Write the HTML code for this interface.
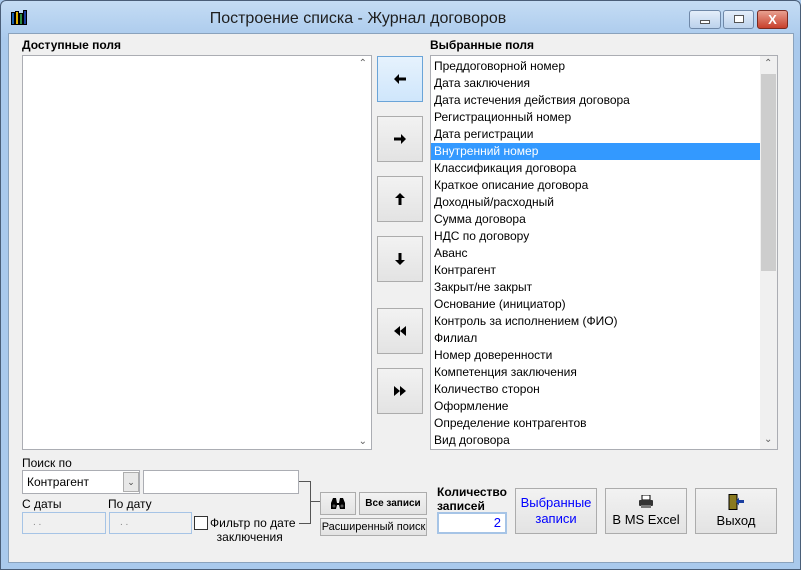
<!DOCTYPE html>
<html><head><meta charset="utf-8"><style>
*{box-sizing:border-box;margin:0;padding:0}
body{width:801px;height:570px;position:relative;overflow:hidden;background:#a9c9ec;font-family:"Liberation Sans","DejaVu Sans",sans-serif;font-size:12px;color:#000}
.a{position:absolute}
#frame{left:0;top:0;width:801px;height:570px;background:linear-gradient(#c4dcf4,#a9c9ec 40px,#a9c9ec);border:1px solid #4a5e78;border-radius:6px 6px 0 0}
#client{left:8px;top:33px;width:786px;height:530px;background:#f0f0f0;border:1px solid #8aa2bc}
.lbl{font-weight:bold;font-size:12px}
.list{background:#fff;border:1px solid #abadb3}
.btn{background:linear-gradient(#f2f2f2,#e3e3e3);border:1px solid #acacac;display:flex;align-items:center;justify-content:center;text-align:center}
.row{position:absolute;left:2px;height:17px;line-height:17px;padding-left:1px;width:327px;white-space:nowrap}
.inp{background:#fff;border:1px solid #abadb3}
.dis{background:#f0f0f0;border:1px solid #a6c4e6;color:#888;font-size:10px;padding-left:10px;line-height:20px}
.wb{top:10px;height:19px;border:1px solid #6f88a8;border-radius:3px;background:linear-gradient(#e4eefa,#bcd2ec)}
</style></head><body>
<div id="frame" class="a"></div>
<div class="a" style="left:11px;top:10px;width:16px;height:16px">
<div class="a" style="left:0;top:2px;width:4px;height:13px;background:#1a5fb0;border:1px solid #000"></div>
<div class="a" style="left:4px;top:1px;width:4px;height:14px;background:#e0b000;border:1px solid #000"></div>
<div class="a" style="left:8px;top:3px;width:4px;height:12px;background:#2a8a40;border:1px solid #000"></div>
<div class="a" style="left:12px;top:0;width:4px;height:15px;background:#1a3fa0;border:1px solid #000"></div>
</div>
<div class="a" style="left:0;top:10px;width:716px;text-align:center;font-size:16px;color:#1e1e1e">Построение списка - Журнал договоров</div>
<div class="a wb" style="left:689px;width:32px"><div class="a" style="left:10px;top:9px;width:10px;height:4px;background:#fff;border:1px solid #555"></div></div>
<div class="a wb" style="left:723px;width:31px"><div class="a" style="left:10px;top:4px;width:10px;height:8px;border:1px solid #555;background:#fff"></div></div>
<div class="a wb" style="left:757px;width:31px;background:linear-gradient(#e8a090,#c8402c);border-color:#7a2a20;color:#fff;font-weight:bold;text-align:center;font-size:13px;line-height:17px">X</div>
<div id="client" class="a"></div>

<div class="a lbl" style="left:22px;top:38px">Доступные поля</div>
<div class="a lbl" style="left:430px;top:38px">Выбранные поля</div>

<div class="a list" style="left:22px;top:55px;width:350px;height:395px">
<div class="a" style="right:4px;top:2px;color:#606060;font-size:10px">&#8963;</div>
<div class="a" style="right:4px;bottom:2px;color:#606060;font-size:10px">&#8964;</div>
</div>

<div class="a btn" style="left:377px;top:56px;width:46px;height:46px;background:linear-gradient(#e6f2fd,#cfe6fb);border-color:#6aa4d8"><svg width="12" height="10" viewBox="0 0 12 10"><path d="M0 5 L5 0 L5 3.5 L12 3.5 L12 6.5 L5 6.5 L5 10 Z" fill="#000"/></svg></div>
<div class="a btn" style="left:377px;top:116px;width:46px;height:46px"><svg width="12" height="10" viewBox="0 0 12 10"><path d="M12 5 L7 0 L7 3.5 L0 3.5 L0 6.5 L7 6.5 L7 10 Z" fill="#000"/></svg></div>
<div class="a btn" style="left:377px;top:176px;width:46px;height:46px"><svg width="10" height="12" viewBox="0 0 10 12"><path d="M5 0 L0 5 L3.5 5 L3.5 12 L6.5 12 L6.5 5 L10 5 Z" fill="#000"/></svg></div>
<div class="a btn" style="left:377px;top:236px;width:46px;height:46px"><svg width="10" height="12" viewBox="0 0 10 12"><path d="M5 12 L0 7 L3.5 7 L3.5 0 L6.5 0 L6.5 7 L10 7 Z" fill="#000"/></svg></div>
<div class="a btn" style="left:377px;top:308px;width:46px;height:46px"><svg width="12" height="10" viewBox="0 0 12 10"><path d="M0 5 L6 0 L6 10 Z M6 5 L12 0 L12 10 Z" fill="#000"/></svg></div>
<div class="a btn" style="left:377px;top:368px;width:46px;height:46px"><svg width="12" height="10" viewBox="0 0 12 10"><path d="M0 0 L6 5 L0 10 Z M6 0 L12 5 L6 10 Z" fill="#000"/></svg></div>

<div class="a list" style="left:430px;top:55px;width:348px;height:395px;overflow:hidden">
<div class="a" style="left:0;top:87px;width:329px;height:17px;background:#3399ff"></div>
<div class="row" style="top:2px">Преддоговорной номер</div>
<div class="row" style="top:19px">Дата заключения</div>
<div class="row" style="top:36px">Дата истечения действия договора</div>
<div class="row" style="top:53px">Регистрационный номер</div>
<div class="row" style="top:70px">Дата регистрации</div>
<div class="row" style="top:87px;color:#fff">Внутренний номер</div>
<div class="row" style="top:104px">Классификация договора</div>
<div class="row" style="top:121px">Краткое описание договора</div>
<div class="row" style="top:138px">Доходный/расходный</div>
<div class="row" style="top:155px">Сумма договора</div>
<div class="row" style="top:172px">НДС по договору</div>
<div class="row" style="top:189px">Аванс</div>
<div class="row" style="top:206px">Контрагент</div>
<div class="row" style="top:223px">Закрыт/не закрыт</div>
<div class="row" style="top:240px">Основание (инициатор)</div>
<div class="row" style="top:257px">Контроль за исполнением (ФИО)</div>
<div class="row" style="top:274px">Филиал</div>
<div class="row" style="top:291px">Номер доверенности</div>
<div class="row" style="top:308px">Компетенция заключения</div>
<div class="row" style="top:325px">Количество сторон</div>
<div class="row" style="top:342px">Оформление</div>
<div class="row" style="top:359px">Определение контрагентов</div>
<div class="row" style="top:376px">Вид договора</div>
<div class="a" style="left:329px;top:0;width:17px;height:393px;background:#f0f0f0"></div>
<div class="a" style="left:330px;top:18px;width:15px;height:197px;background:#cdcdcd"></div>
<div class="a" style="left:333px;top:2px;color:#606060;font-size:10px">&#8963;</div>
<div class="a" style="left:333px;top:378px;color:#606060;font-size:10px">&#8964;</div>
</div>

<div class="a" style="left:22px;top:456px">Поиск по</div>
<div class="a inp" style="left:22px;top:470px;width:118px;height:24px;line-height:22px;padding-left:4px">Контрагент</div>
<div class="a" style="left:123px;top:472px;width:16px;height:20px;background:#e8e8e8;border:1px solid #adadad;text-align:center;font-size:9px;line-height:18px;color:#444">&#8964;</div>
<div class="a inp" style="left:143px;top:470px;width:156px;height:24px"></div>
<div class="a" style="left:22px;top:497px">С даты</div>
<div class="a" style="left:108px;top:497px">По дату</div>
<div class="a dis" style="left:22px;top:512px;width:84px;height:22px">. .</div>
<div class="a dis" style="left:109px;top:512px;width:83px;height:22px">. .</div>
<div class="a" style="left:194px;top:516px;width:14px;height:14px;background:#fff;border:1px solid #333"></div>
<div class="a" style="left:210px;top:516px;line-height:14px">Фильтр по дате<br>&nbsp;&nbsp;заключения</div>
<div class="a" style="left:299px;top:481px;width:12px;height:43px;border:1px solid #555;border-left:none"></div>
<div class="a" style="left:311px;top:501px;width:9px;height:1px;background:#555"></div>
<div class="a btn" style="left:320px;top:492px;width:36px;height:23px"><svg width="16" height="12" viewBox="0 0 16 12"><path d="M1 5 L3 0 L6 0 L7 5 L9 5 L10 0 L13 0 L15 5 L15 11 L10 11 L9 7 L7 7 L6 11 L1 11 Z" fill="#000"/><circle cx="4" cy="8" r="1.5" fill="#555"/><circle cx="12" cy="8" r="1.5" fill="#555"/></svg></div>
<div class="a btn" style="left:359px;top:492px;width:68px;height:23px;font-size:10px;font-weight:bold">Все записи</div>
<div class="a btn" style="left:320px;top:518px;width:107px;height:18px;font-size:11px">Расширенный поиск</div>
<div class="a lbl" style="left:437px;top:485px;line-height:14px">Количество<br>записей</div>
<div class="a inp" style="left:437px;top:512px;width:70px;height:22px;border:2px solid #a6c4e6;text-align:right;padding-right:4px;line-height:18px;color:#0000ff;font-size:13px">2</div>
<div class="a btn" style="left:515px;top:488px;width:82px;height:46px;color:#0000ff;font-size:13px;line-height:16px">Выбранные<br>записи</div>
<div class="a btn" style="left:605px;top:488px;width:82px;height:46px;font-size:13px;flex-direction:column"><svg width="16" height="14" viewBox="0 0 16 14" style="margin-bottom:3px"><rect x="4" y="0" width="8" height="5" fill="#fff" stroke="#000"/><rect x="1" y="5" width="14" height="6" rx="1" fill="#333"/><rect x="3" y="10" width="10" height="3" fill="#777"/></svg><div>В MS Excel</div></div>
<div class="a btn" style="left:695px;top:488px;width:82px;height:46px;font-size:13px;flex-direction:column"><svg width="16" height="16" viewBox="0 0 16 16" style="margin-bottom:3px"><rect x="1" y="0.5" width="8" height="15" fill="#8a7a20" stroke="#000"/><path d="M16 6 L11 6 L11 3.5 L8 7.5 L11 11.5 L11 9 L16 9 Z" fill="#1a3fa0"/></svg><div>Выход</div></div>
</body></html>
